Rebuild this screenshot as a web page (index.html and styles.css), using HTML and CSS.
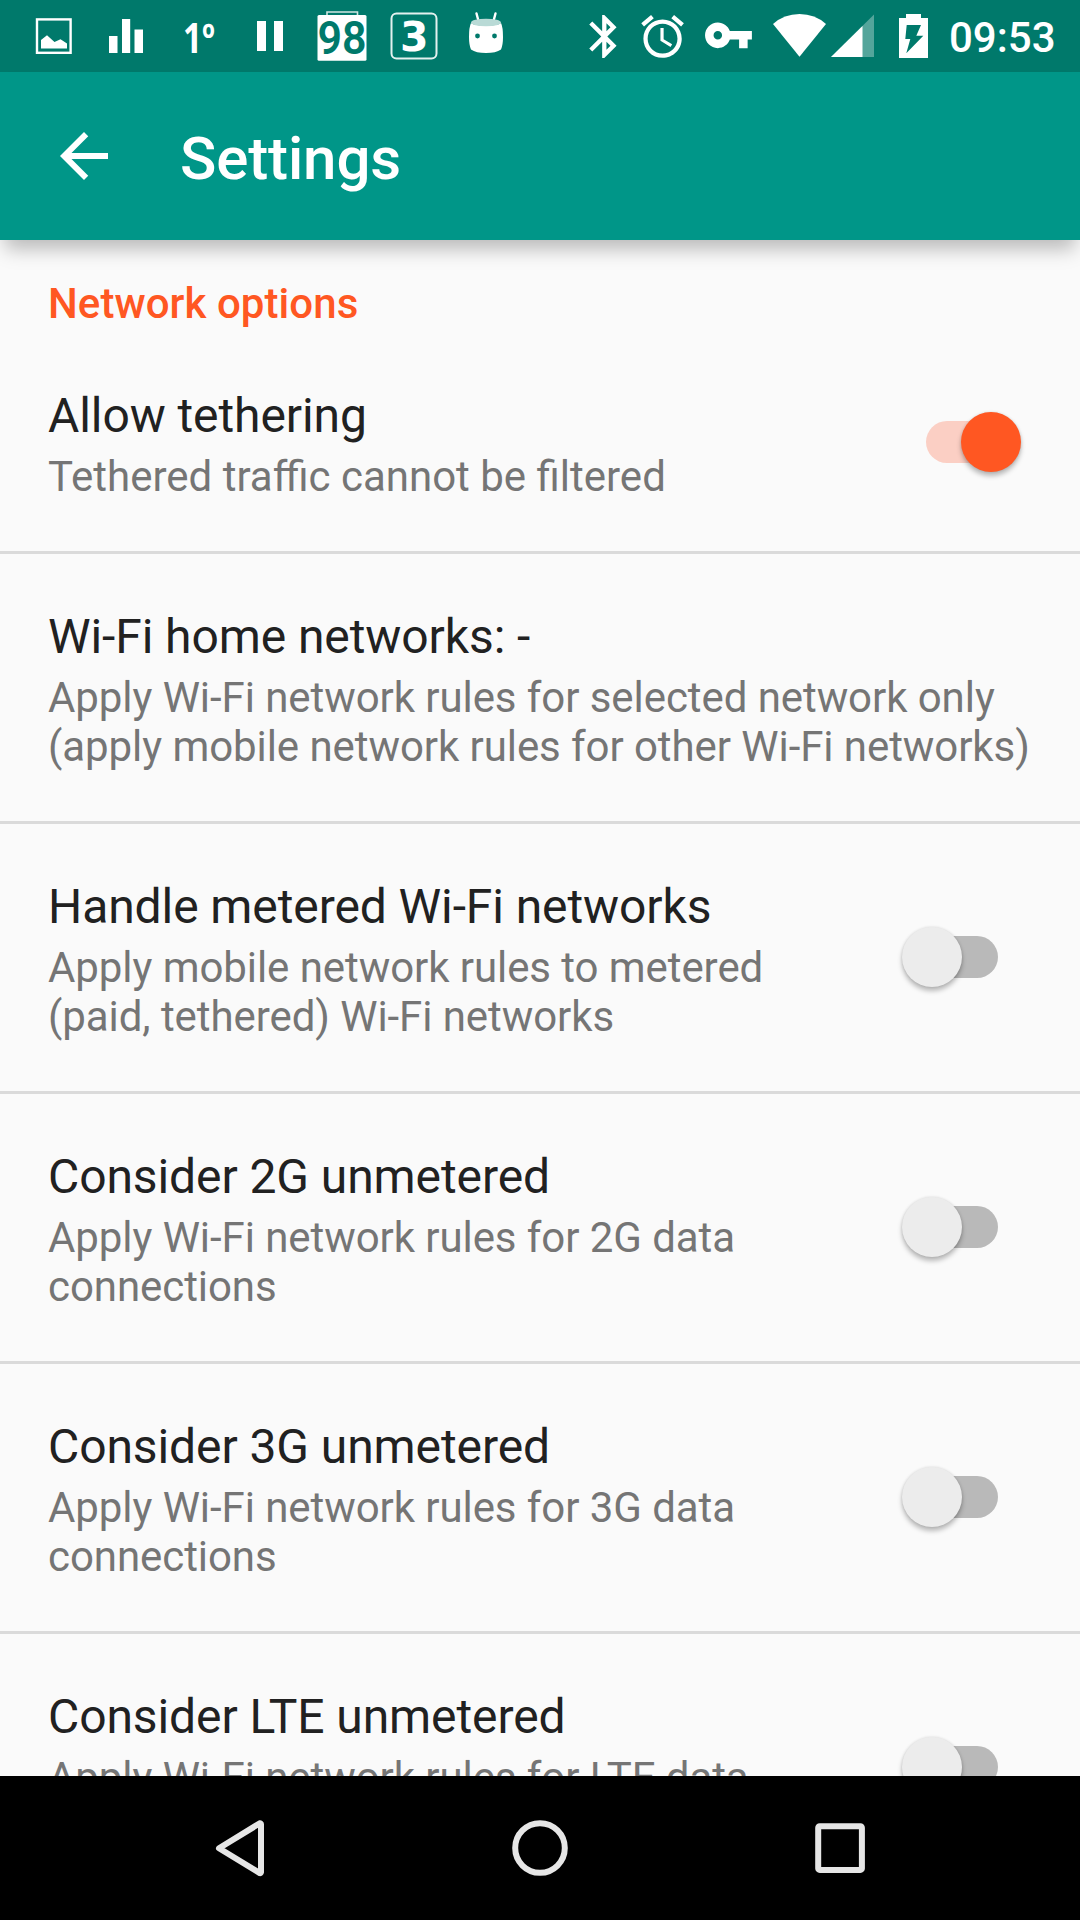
FILE: index.html
```html
<!DOCTYPE html>
<html lang="en">
<head>
<meta charset="utf-8">
<title>Settings</title>
<link rel="stylesheet" href="styles.css">
</head>
<body>
<div class="screen">
  <div class="statusbar">
    <div class="notifications">
      <svg viewBox="18 0 72 72"><rect x="37" y="19.4" width="33.6" height="33.4" fill="none" stroke="#fff" stroke-width="2.4"/><path d="M41 48.500V40L47 35.200L54.500 42L60.500 39.300L67 43.500V48.500Z"/></svg>
      <svg viewBox="90 0 72 72"><path d="M109 36h8.500v17H109zM122 19h8.200v34H122zM134.500 29.500h8.500V53h-8.500z"/></svg>
      <svg viewBox="162 0 72 72"><text class="temperature" x="183" y="53" textLength="32" lengthAdjust="spacingAndGlyphs">1º</text></svg>
      <svg viewBox="234 0 72 72"><path d="M257 21h9v30h-9zM274 21h9v30h-9z"/></svg>
      <svg viewBox="306 0 72 72"><path d="M327 15v-3h30.500v3" fill="none" stroke="#cfe5e2" stroke-width="1.600"/><rect x="317.500" y="15" width="49" height="45.700" rx="1.500"/><text class="percent" x="317.500" y="54" textLength="49" lengthAdjust="spacingAndGlyphs">98</text></svg>
      <svg viewBox="378 0 72 72"><rect x="391.500" y="13.500" width="45" height="45" rx="5" fill="none" stroke="#e4f1ef" stroke-width="2"/><text class="count" x="400" y="50.500">3</text></svg>
      <svg viewBox="450 0 72 72"><path d="M476.500 13.500L478.500 21M495.500 13.500L493.500 21" stroke="#fff" stroke-width="2.400" stroke-linecap="round"/><path d="M471 23C475 26.500 497 26.500 501 23Q503 27 503 37Q503 45 501 49.500Q496 53 486 53Q476 53 471 49.500Q469 45 469 37Q469 27 471 23Z"/><ellipse cx="486" cy="22.500" rx="15" ry="3.800" fill="#b9dad6"/><circle class="eye" cx="477.500" cy="36" r="2.400"/><circle class="eye" cx="494.500" cy="36" r="2.400"/></svg>
    </div>
    <div class="system">
      <svg class="w60" viewBox="573 0 60 72"><path transform="translate(578.500 10.700) scale(2.150)" d="M17.710 7.710L12 2h-1v7.590L6.410 5 5 6.410 10.590 12 5 17.590 6.410 19 11 14.410V22h1l5.710-5.710-4.300-4.290 4.300-4.290zM13 5.830l1.880 1.880L13 9.590V5.830zm1.880 10.460L13 18.170v-3.760l1.880 1.880z"/></svg>
      <svg class="w60" viewBox="633 0 60 72"><path transform="translate(637 11) scale(2.130)" d="M22 5.720l-4.600-3.860-1.290 1.530 4.600 3.860L22 5.720zM7.880 3.390L6.600 1.860 2 5.710l1.290 1.530 4.590-3.850zM12.500 8H11v6l4.750 2.850.75-1.230-4-2.370V8zM12 4c-4.970 0-9 4.030-9 9s4.020 9 9 9c4.970 0 9-4.030 9-9s-4.030-9-9-9zm0 16c-3.870 0-7-3.130-7-7s3.130-7 7-7 7 3.130 7 7-3.130 7-7 7z"/></svg>
      <svg class="w72" viewBox="693 0 72 72"><path transform="translate(702.900 9.800) scale(2.130)" d="M12.650 10C11.830 7.670 9.610 6 7 6c-3.310 0-6 2.690-6 6s2.690 6 6 6c2.610 0 4.830-1.670 5.650-4H17v4h4v-4h2v-4H12.650zM7 14c-1.100 0-2-.9-2-2s.9-2 2-2 2 .9 2 2-.9 2-2 2z"/></svg>
      <svg class="w60" viewBox="769 0 60 72"><path d="M799.500 56.700L773 24Q784 14 799.500 14T826 24Z"/></svg>
      <svg class="w60" viewBox="829 0 60 72"><path d="M831 57L874 14.500V57Z" opacity=".33"/><path d="M831 57L862.500 25.900V57Z"/></svg>
      <svg class="w60" viewBox="889 0 60 72"><path fill-rule="evenodd" d="M906 14h15v4h7v40h-29V18h7zM906.700 25L905.300 39H910.300L906.300 53.300L923.300 35.700H916.300L921 25Z"/></svg>
      <span class="clock">09:53</span>
    </div>
  </div>

  <header class="toolbar">
    <svg class="back" viewBox="0 0 24 24"><path d="M20 11H7.830l5.590-5.590L12 4l-8 8 8 8 1.410-1.410L7.830 13H20v-2z"/></svg>
    <h1>Settings</h1>
  </header>

  <main class="list">
    <h2>Network options</h2>
    <section class="row">
      <div class="text"><h3>Allow tethering</h3><p class="ligatures">Tethered traffic cannot be filtered</p></div>
      <div class="switch on"><span class="thumb"></span></div>
    </section>
    <section class="row">
      <div class="text"><h3>Wi-Fi home networks: -</h3><p>Apply Wi-Fi network rules for selected network only<br>(apply mobile network rules for other Wi-Fi networks)</p></div>
    </section>
    <section class="row">
      <div class="text"><h3>Handle metered Wi-Fi networks</h3><p>Apply mobile network rules to metered<br>(paid, tethered) Wi-Fi networks</p></div>
      <div class="switch"><span class="thumb"></span></div>
    </section>
    <section class="row">
      <div class="text"><h3>Consider 2G unmetered</h3><p>Apply Wi-Fi network rules for 2G data<br>connections</p></div>
      <div class="switch"><span class="thumb"></span></div>
    </section>
    <section class="row">
      <div class="text"><h3>Consider 3G unmetered</h3><p>Apply Wi-Fi network rules for 3G data<br>connections</p></div>
      <div class="switch"><span class="thumb"></span></div>
    </section>
    <section class="row">
      <div class="text"><h3>Consider LTE unmetered</h3><p>Apply Wi-Fi network rules for LTE data<br>connections</p></div>
      <div class="switch"><span class="thumb"></span></div>
    </section>
  </main>

  <nav class="navbar">
    <svg viewBox="0 0 72 72"><path d="M15 36.300L55.800 11.300a1 1 0 0 1 1.200 1V60.300a1 1 0 0 1-1.200 .8Z"/></svg>
    <svg viewBox="0 0 72 72"><circle cx="36" cy="36" r="24.800"/></svg>
    <svg viewBox="0 0 72 72"><rect x="14.200" y="14.200" width="43.700" height="43.700" rx="1.500"/></svg>
  </nav>
</div>
</body>
</html>
```
FILE: styles.css
```css
* { box-sizing: border-box; }
body { margin: 0; font-family: Roboto, sans-serif; }
h1, h2, h3, p { margin: 0; }

.screen {
  width: 1080px;
  height: 1920px;
  display: flex;
  flex-direction: column;
  overflow: hidden;
  background: #fafafa;
}

.statusbar {
  flex: 0 0 72px;
  height: 72px;
  min-height: 0;
  display: flex;
  justify-content: space-between;
  padding: 0 0 0 18px;
  background: #00796b;
}
.statusbar svg { display: block; width: 72px; height: 72px; fill: #fff; }
.statusbar .w60 { width: 60px; }
.statusbar .w72 { width: 72px; margin-right: 4px; }
.notifications, .system { display: flex; height: 72px; }
.system { width: 507px; }
.clock {
  height: 72px;
  font-size: 42px;
  font-weight: 500;
  line-height: 75px;
  color: #fff;
}
.temperature { font: bold 41px "Open Sans", sans-serif; }
.percent { font: 600 46px Roboto, sans-serif; fill: #00796b; }
.count { font: bold 41px "DejaVu Sans", sans-serif; }
.eye { fill: #00796b; }

.toolbar {
  flex: 0 0 168px;
  display: flex;
  align-items: center;
  gap: 60px;
  padding-left: 48px;
  background: #009688;
  box-shadow: 0 14px 18px -5px rgba(0, 0, 0, .26);
  z-index: 1;
}
.back { width: 72px; height: 72px; fill: #fff; }
.toolbar h1 {
  padding-top: 6px;
  font-size: 60px;
  font-weight: 500;
  line-height: 72px;
  letter-spacing: -.12px;
  color: #fff;
}

.list { flex: 1 1 0; min-height: 0; overflow: hidden; }
.list h2 {
  padding: 39px 48px 5px;
  font-size: 42px;
  font-weight: 500;
  line-height: 49px;
  letter-spacing: .06px;
  color: #ff5722;
}
.row {
  display: flex;
  align-items: center;
  justify-content: space-between;
  padding: 0 0 0 48px;
  border-bottom: 3px solid #dadada;
}
.text { padding: 55px 0 50px; white-space: nowrap; }
.text h3 { font-size: 48px; font-weight: 400; line-height: 56px; letter-spacing: -.09px; color: #212121; }
.text p { margin-top: 8px; font-size: 42px; line-height: 49px; letter-spacing: -.07px; color: #757575; }
.text .ligatures { letter-spacing: normal; }

.switch {
  flex: none;
  display: flex;
  align-items: center;
  width: 72px;
  height: 42px;
  margin: 0 82px 1px 0;
  border-radius: 21px;
  background: #b9b9b9;
}
.thumb {
  flex: none;
  width: 60px;
  height: 60px;
  margin-left: -23.7px;
  border-radius: 50%;
  background: #ececec;
  box-shadow: 0 4px 5px rgba(0, 0, 0, .26), 0 0 3px rgba(0, 0, 0, .12);
}
.on { background: #fbcfc4; }
.on .thumb { margin-left: 35.3px; background: #ff5722; }

.navbar {
  flex: 0 0 144px;
  display: flex;
  align-items: center;
  justify-content: space-between;
  padding: 0 204px;
  background: #000;
}
.navbar svg { width: 72px; height: 72px; fill: none; stroke: #e6e6e6; stroke-width: 6; stroke-linejoin: round; }
```
